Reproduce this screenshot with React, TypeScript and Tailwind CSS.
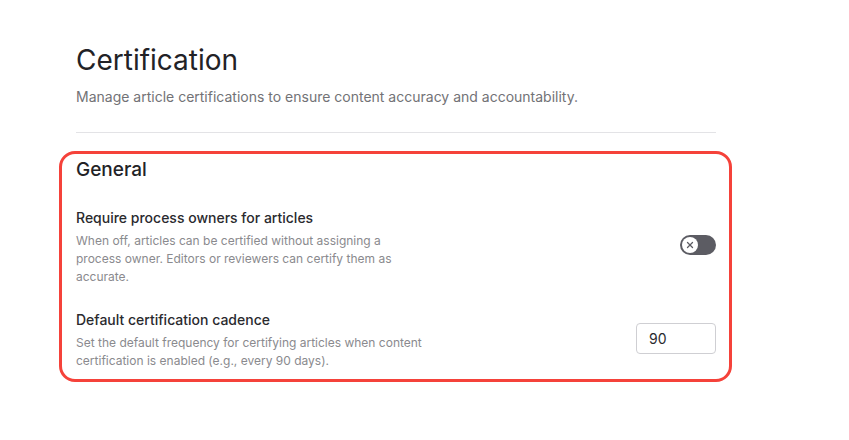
import { X } from "lucide-react";

function Toggle() {
  return (
    <div className="-mt-1 flex h-5 w-9 shrink-0 items-center rounded-full bg-[#5c5c63] p-0.5">
      <div className="flex size-4 items-center justify-center rounded-full bg-white">
        <X className="size-2.5 text-[#5c5c63]" strokeWidth={3} />
      </div>
    </div>
  );
}

function SettingRow({
  title,
  description,
  children,
}: {
  title: string;
  description: string;
  children: React.ReactNode;
}) {
  return (
    <div className="flex items-center justify-between">
      <div className="max-w-[350px]">
        <div className="text-sm leading-5 font-medium text-[#2a2a2e]">{title}</div>
        <p className="mt-1 text-xs leading-[18px] text-[#8a8a8e]">{description}</p>
      </div>
      {children}
    </div>
  );
}

export default function App() {
  return (
    <div
      className="min-h-screen bg-white"
      style={{ fontFamily: "Inter, 'Noto Sans', sans-serif" }}
    >
      <main className="ml-[76px] w-[640px] pt-[42px]">
        <h1 className="text-[28px] leading-9 text-[#222226]">Certification</h1>
        <p className="mt-[9px] text-sm leading-5 text-[#727276]">
          Manage article certifications to ensure content accuracy and accountability.
        </p>
        <div className="mt-[25px] h-px bg-[#e3e3e6]" />

        <section className="-mr-4 -ml-[17px] mt-[18px] rounded-[16px] border-[3px] border-[#f5423a] pt-0.5 pr-[13px] pb-[9px] pl-[14px]">
          <h2 className="text-[19px] leading-7 font-medium text-[#222226]">General</h2>

          <div className="mt-6 flex flex-col gap-6">
            <SettingRow
              title="Require process owners for articles"
              description="When off, articles can be certified without assigning a process owner. Editors or reviewers can certify them as accurate."
            >
              <Toggle />
            </SettingRow>

            <SettingRow
              title="Default certification cadence"
              description="Set the default frequency for certifying articles when content certification is enabled (e.g., every 90 days)."
            >
              <input
                type="text"
                defaultValue="90"
                className="-mt-1 h-[31px] w-20 rounded border border-[#cfcfd3] px-3 text-sm text-[#2a2a2e] outline-none"
              />
            </SettingRow>
          </div>
        </section>
      </main>
    </div>
  );
}
